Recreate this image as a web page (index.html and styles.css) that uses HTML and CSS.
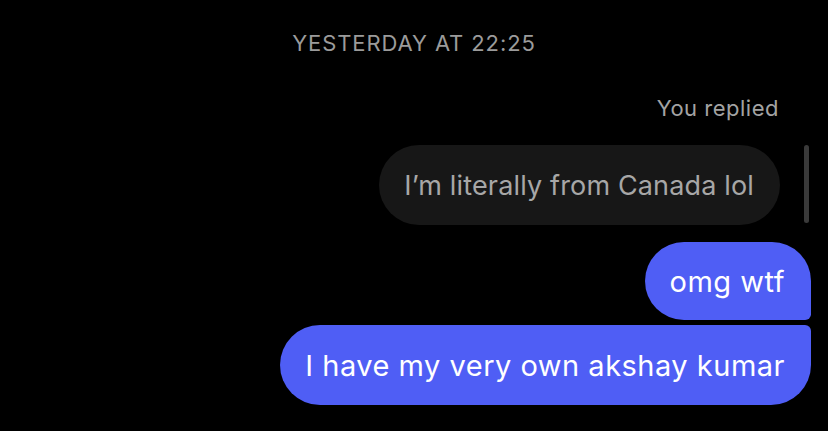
FILE: index.html
```html
<!DOCTYPE html>
<html lang="en">
<head>
  <meta charset="UTF-8">
  <meta name="viewport" content="width=device-width, initial-scale=1.0">
  <title>Chat</title>
  <link rel="stylesheet" href="styles.css">
</head>
<body>

  <div class="thread">
    <div class="timestamp">YESTERDAY AT 22:25</div>

    <div class="reply-group">
      <div class="reply-label">You replied</div>
      <div class="reply-bubble">I’m literally from Canada lol</div>
    </div>

    <div class="messages">
      <div class="bubble bubble-first">omg wtf</div>
      <div class="bubble bubble-last">I have my very own akshay kumar</div>
    </div>

    <div class="scrollbar"></div>
  </div>

</body>
</html>
```

FILE: styles.css
```css
body {
  font-family: Inter, Roboto, "Noto Sans", sans-serif;
  background-color: #000;
  margin: 0;
  padding: 0;
  height: 100vh;
  overflow: hidden;
}

.thread {
  position: relative;
  display: flex;
  flex-direction: column;
  padding: 30px 17px 0 0;
}

.timestamp {
  text-align: center;
  padding-left: 17px;
  font-size: 22px;
  line-height: 26px;
  color: #9b9b9b;
  letter-spacing: 0.9px;
}

.reply-group {
  display: flex;
  flex-direction: column;
  align-items: flex-end;
  margin-top: 40px;
  margin-right: 31px;
}

.reply-label {
  font-size: 22px;
  line-height: 24px;
  color: #a3a3a3;
  letter-spacing: 0.5px;
  margin-right: 1px;
}

.reply-bubble {
  margin-top: 25px;
  height: 80px;
  padding: 0 26px 0 25px;
  display: flex;
  align-items: center;
  background-color: #171717;
  color: #a7a7a7;
  border-radius: 40px;
  font-size: 27px;
  letter-spacing: 0.15px;
}

.messages {
  display: flex;
  flex-direction: column;
  align-items: flex-end;
  margin-top: 17px;
  gap: 5px;
}

.bubble {
  display: flex;
  align-items: center;
  padding: 0 26px 0 25px;
  background-color: #4f5ef5;
  color: #fff;
  font-size: 29px;
  letter-spacing: 0.5px;
}

.bubble-first {
  height: 78px;
  border-radius: 40px 40px 6px 40px;
}

.bubble-last {
  height: 80px;
  border-radius: 40px 6px 40px 40px;
}

.scrollbar {
  position: absolute;
  top: 145px;
  right: 19px;
  width: 5px;
  height: 78px;
  border-radius: 3px;
  background-color: #3a3a3a;
}
```
